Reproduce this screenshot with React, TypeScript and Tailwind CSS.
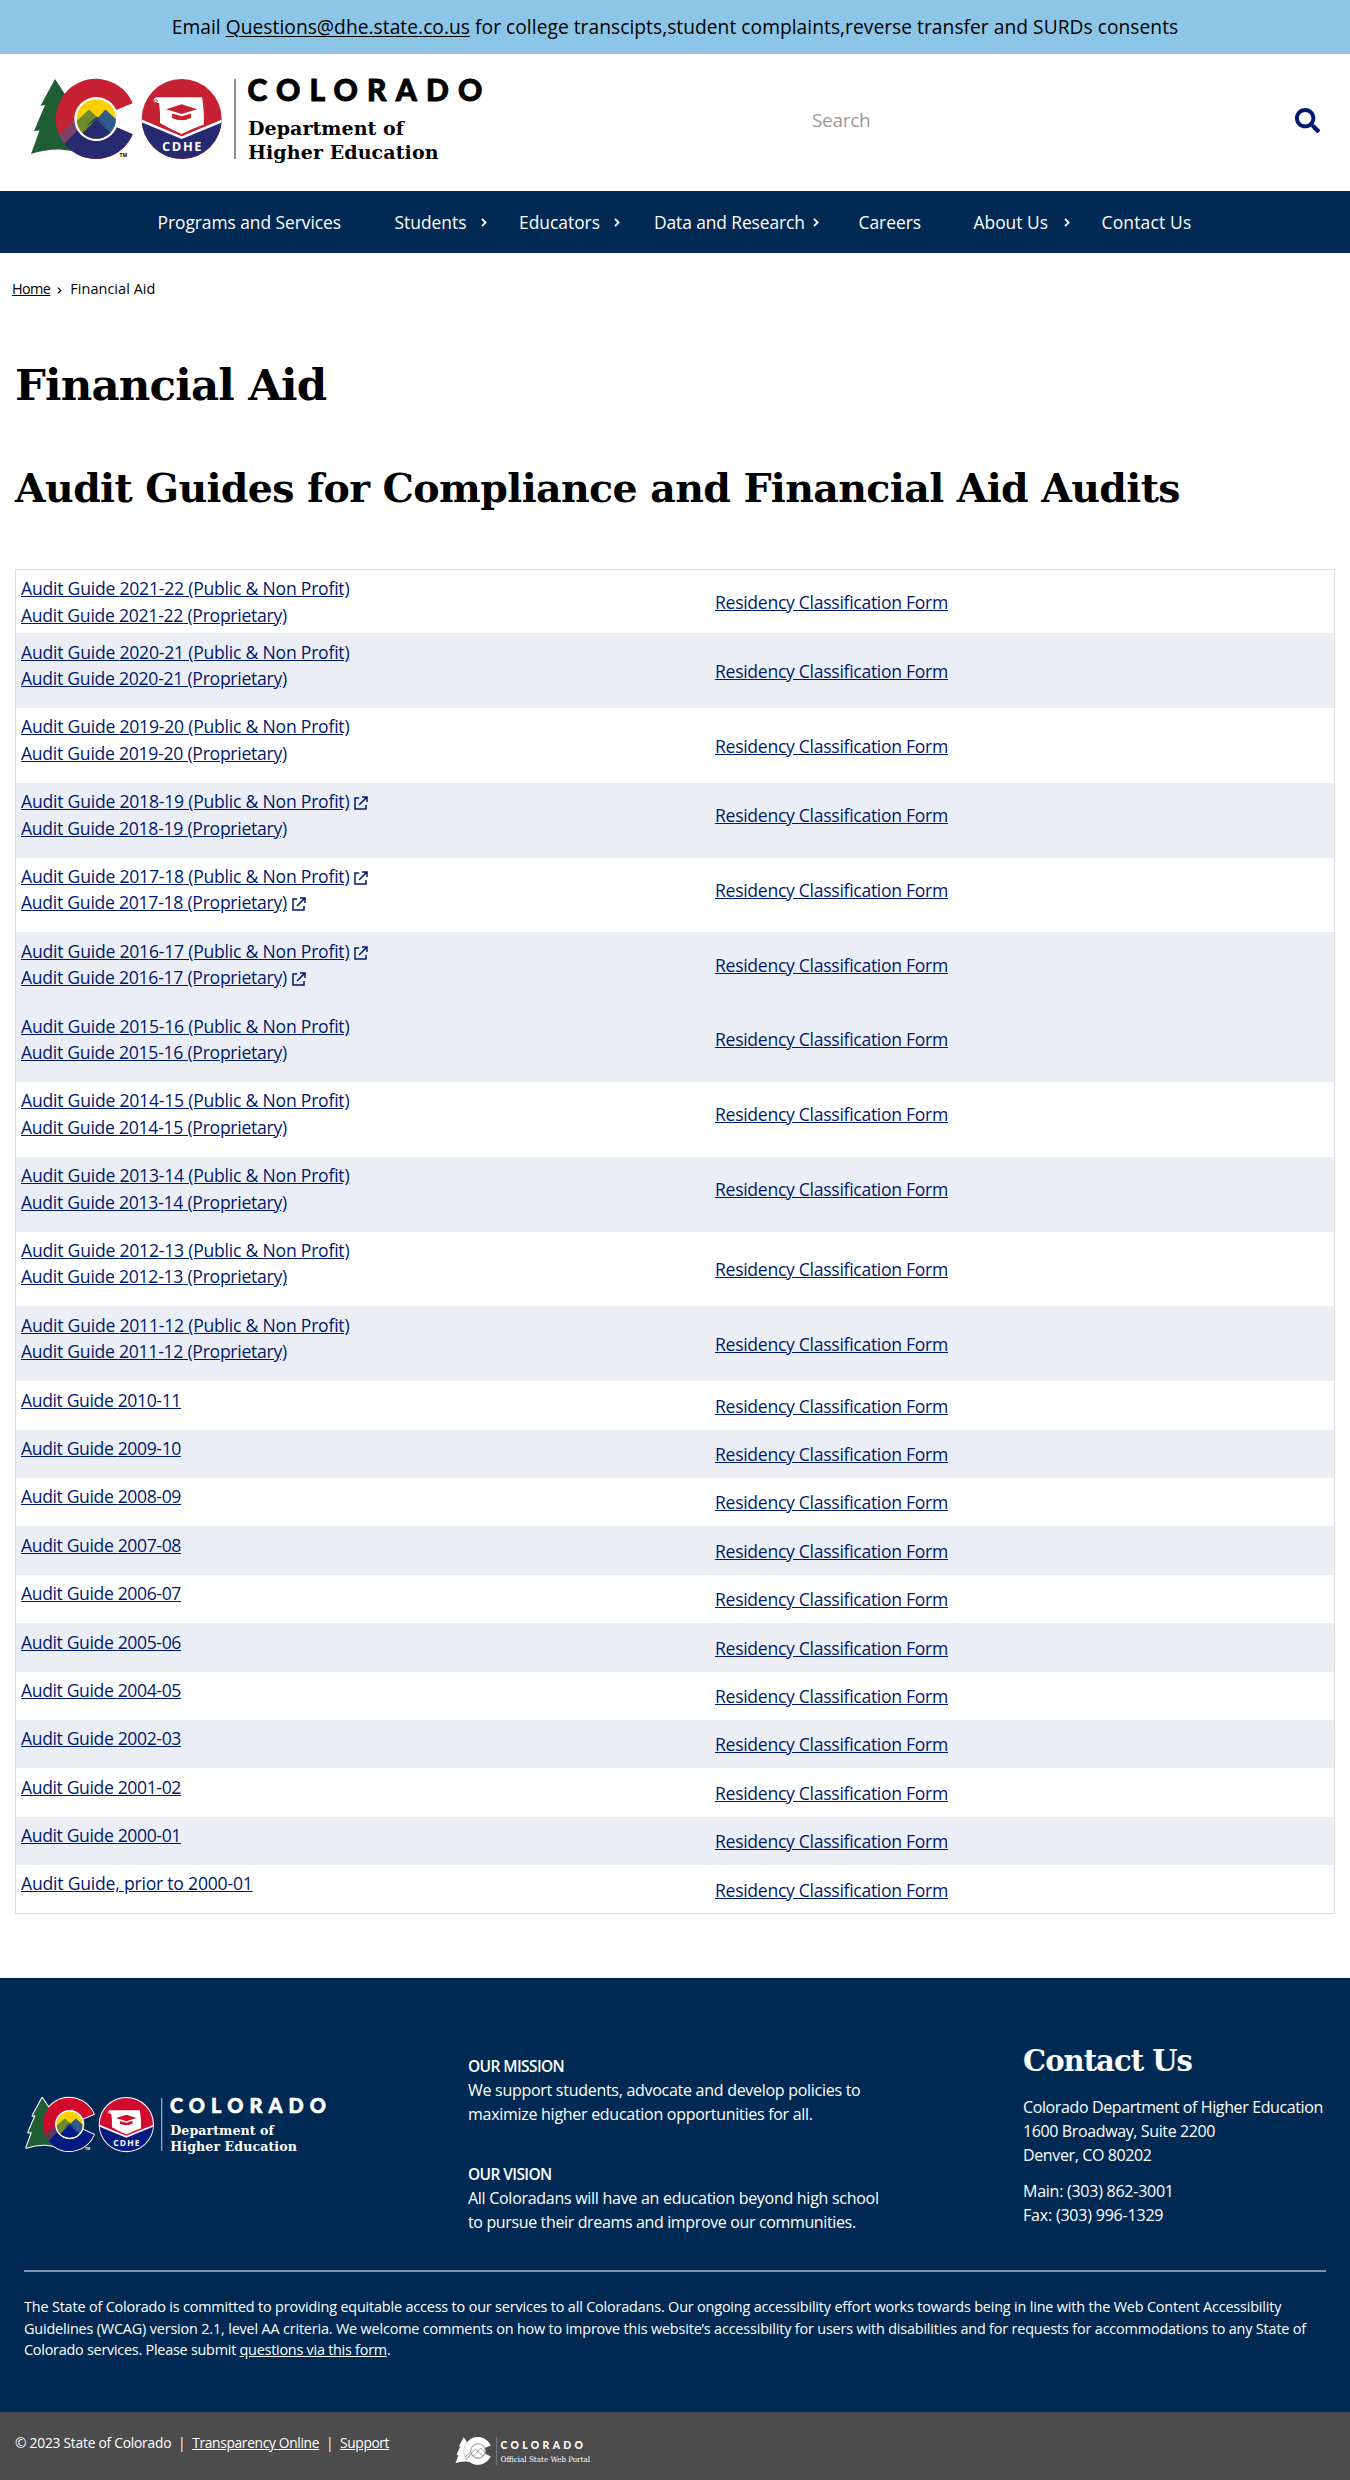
import React from "react";
import { FaSearch } from "react-icons/fa";

const SLAB = "font-['DejaVu_Serif',serif]";

const TREE =
  "M55 79 L40.5 105.8 L45 105 L34 131 L39.5 130.5 L31 154 Q46 149 60 149.5 Q72 150.5 82 153 L90 110 L69.5 101 Z";
const C_SHAPE =
  "M132.7 103.3 A40 40 0 1 0 132.7 134.3 L116 127 A21 21 0 1 1 115 110.5 Z";

function Logo({ id, light = false, className }: { id: string; light?: boolean; className: string }) {
  const ink = light ? "#ffffff" : "#000000";
  const red = light ? "#d20a2e" : "#c62033";
  const blue = light ? "#001b84" : "#262a70";
  return (
    <svg viewBox="20 70 470 100" className={className} role="img" aria-label="Colorado Department of Higher Education">
      <defs>
        <clipPath id={`${id}-c`}>
          <path d={C_SHAPE} />
        </clipPath>
        <clipPath id={`${id}-sun`}>
          <circle cx="96.3" cy="119" r="19.7" />
        </clipPath>
        <clipPath id={`${id}-seal`}>
          <circle cx="181.7" cy="119" r="40" />
        </clipPath>
      </defs>
      {light && (
        <g fill="none" stroke="#fff" strokeWidth="3.2" strokeLinejoin="round">
          <path d={TREE} />
          <path d={C_SHAPE} />
          <circle cx="181.7" cy="119" r="40" />
        </g>
      )}
      <path d={TREE} fill="#205f35" />
      <g clipPath={`url(#${id}-c)`}>
        <rect x="50" y="75" width="95" height="90" fill={red} />
        <path d="M54 140 L76 119 L96 132 L96 165 L54 165 Z" fill={light ? "#5b3a5e" : "#7b4468"} />
        <path d="M60 148 L96 112 L112 127 L145 127 L145 165 L60 165 Z" fill={blue} />
      </g>
      <circle cx="96.3" cy="119" r="22" fill="#fff" />
      <g clipPath={`url(#${id}-sun)`}>
        <rect x="74" y="96" width="45" height="45" fill="#fdd000" />
        <path d="M70 127 L89 109.5 L112 131 L96 145 L70 145 Z" fill="#6f8a2c" />
        <path d="M90 126 L105.5 109.5 L124 127 L110 145 Z" fill="#2e5c91" />
        <path d="M70 145 L96.5 119.5 L123 145 Z" fill={blue} />
        <path d="M86 126 L96.5 116.5 L107 126 L96.5 120 Z" fill="#234a6b" />
      </g>
      <text x="119.5" y="157.3" fontSize="5" fontWeight="700" fill={ink} fontFamily="Open Sans, sans-serif">
        TM
      </text>
      <g clipPath={`url(#${id}-seal)`}>
        <rect x="140" y="78" width="84" height="84" fill={red} />
        <path d="M140 121 L181.7 137.5 L224 121 L224 162 L140 162 Z" fill={blue} />
        <path d="M140 120.2 L181.7 137.6 L224 120.2" fill="none" stroke="#fff" strokeWidth="2.6" />
      </g>
      <path
        d="M156 97.3 H202 Q204.5 112 203.8 124.5 Q194 128 181.7 134 Q170 129 160 123 Q160.5 112 159 103 L154 102.5 Q152.5 99 156 97.3 Z"
        fill="#fff"
      />
      <circle cx="155.8" cy="101.3" r="1.4" fill="none" stroke={red} strokeWidth="0.9" />
      <path d="M166 109.3 L181.7 104.3 L197 109.3 L181.7 114 Z" fill={red} />
      <path d="M172 113.5 L181.7 116.3 L191 113.5 V118 Q181.7 122.5 172 118 Z" fill={red} />
      <text
        x="162"
        y="150.6"
        fontSize="12.8"
        fontWeight="700"
        fill="#fff"
        textLength="39.5"
        fontFamily="Open Sans, sans-serif"
      >
        CDHE
      </text>
      <rect x="234.2" y="79" width="1.6" height="80" fill={light ? "#b9c4d3" : "#777777"} />
      <text
        x="247.4"
        y="101"
        fontSize="30"
        fontWeight="900"
        fill={ink}
        stroke={ink}
        strokeWidth="0.9"
        textLength="235"
        fontFamily="Lato, sans-serif"
      >
        {"COLORAD"}
        <tspan>O</tspan>
      </text>
      <g fontSize="19" fontWeight="700" fill={ink} fontFamily="'DejaVu Serif', serif">
        <text x="248" y="135" textLength="156">
          Department of
        </text>
        <text x="248" y="158.5" textLength="190.5">
          Higher Education
        </text>
      </g>
    </svg>
  );
}

function PortalLogo() {
  return (
    <svg viewBox="0 0 140 32" className="h-8 w-[140px]" role="img" aria-label="Colorado Official State Web Portal">
      <g transform="translate(-6.2 -25.1) scale(0.345)" fill="#fff">
        <path d={TREE} />
        <circle cx="96.3" cy="119" r="22" />
        <path d={C_SHAPE} stroke="#4c4c4c" strokeWidth="1.5" />
        <path d={C_SHAPE} />
        <circle cx="96.3" cy="119" r="21" stroke="#8a8a8a" strokeWidth="2.6" />
        <path
          d="M60 146 L89 113 L110 134 M82 134 L105 111 L117 124 M57 139 L76 120"
          fill="none"
          stroke="#8a8a8a"
          strokeWidth="2.6"
        />
      </g>
      <rect x="45" y="2" width="0.8" height="28" fill="#858585" />
      <text x="49.5" y="14.3" fontSize="10.4" fontWeight="900" fill="#fff" textLength="82.5" fontFamily="Lato, sans-serif">
        COLORADO
      </text>
      <text
        x="49.5"
        y="27"
        fontSize="7.6"
        fill="#fff"
        textLength="89.5"
        lengthAdjust="spacingAndGlyphs"
        fontFamily="'DejaVu Serif Condensed', 'DejaVu Serif', serif"
      >
        Official State Web Portal
      </text>
    </svg>
  );
}

function ExternalIcon() {
  return (
    <svg
      viewBox="0 0 14 14"
      className="ml-[5px] inline-block h-[14px] w-[14px] align-[-2px]"
      fill="none"
      stroke="#001970"
      strokeWidth="1.5"
    >
      <path d="M5.2 2 H1 V13 H12 V9" />
      <path d="M5 9 L12.6 1.4 M8 1 H13 V6" />
    </svg>
  );
}

function Chevron({ className }: { className: string }) {
  return (
    <svg viewBox="0 0 6 9" className={`mt-0.5 h-[9px] w-[6px] ${className}`} fill="none" stroke="#fff" strokeWidth="1.8">
      <path d="M1 0.8 L4.6 4.5 L1 8.2" />
    </svg>
  );
}

const NAV = [
  { label: "Programs and Services", item: "w-[237px] tracking-[-0.05px]" },
  { label: "Students", item: "w-[124.5px]", chevron: "ml-[15px]" },
  { label: "Educators", item: "w-[135px]", chevron: "ml-[14px]" },
  { label: "Data and Research", item: "w-[204.5px] tracking-[-0.1px]", chevron: "ml-[8px]" },
  { label: "Careers", item: "w-[115px]" },
  { label: "About Us", item: "w-[128px]", chevron: "ml-[16px]" },
  { label: "Contact Us", item: "tracking-[0.2px]" },
];

type Row = { year: string; double?: boolean; shaded: boolean; ext?: number; lift?: boolean; first?: boolean };

const ROWS: Row[] = [
  { year: "2021-22", double: true, shaded: false, first: true },
  { year: "2020-21", double: true, shaded: true },
  { year: "2019-20", double: true, shaded: false },
  { year: "2018-19", double: true, shaded: true, ext: 1, lift: true },
  { year: "2017-18", double: true, shaded: false, ext: 2, lift: true },
  { year: "2016-17", double: true, shaded: true, ext: 2, lift: true },
  { year: "2015-16", double: true, shaded: true, lift: true },
  { year: "2014-15", double: true, shaded: false, lift: true },
  { year: "2013-14", double: true, shaded: true, lift: true },
  { year: "2012-13", double: true, shaded: false },
  { year: "2011-12", double: true, shaded: true },
  { year: "2010-11", shaded: false },
  { year: "2009-10", shaded: true },
  { year: "2008-09", shaded: false },
  { year: "2007-08", shaded: true },
  { year: "2006-07", shaded: false },
  { year: "2005-06", shaded: true },
  { year: "2004-05", shaded: false },
  { year: "2002-03", shaded: true },
  { year: "2001-02", shaded: false },
  { year: "2000-01", shaded: true },
  { year: "prior", shaded: false },
];

function AuditRow({ row }: { row: Row }) {
  const height = row.first ? "h-[63.2px]" : row.double ? "h-[74.8px]" : "h-[48.4px]";
  return (
    <div className={`flex ${height} ${row.shaded ? "bg-[#ebeff5]" : "bg-white"}`}>
      <div className="w-[699px] pt-[5.4px] pl-[5px]">
        {row.double ? (
          <>
            <div className="whitespace-nowrap">
              <a href="#" className="tracking-[-0.23px] underline">
                Audit Guide {row.year} (Public &amp; Non Profit)
              </a>
              {row.ext && <ExternalIcon />}
            </div>
            <div className="whitespace-nowrap">
              <a href="#" className="tracking-[-0.27px] underline">
                Audit Guide {row.year} (Proprietary)
              </a>
              {row.ext === 2 && <ExternalIcon />}
            </div>
          </>
        ) : row.year === "prior" ? (
          <a href="#" className="tracking-[-0.22px] underline">
            Audit Guide, prior to 2000-01
          </a>
        ) : (
          <a href="#" className="tracking-[-0.38px] underline">
            Audit Guide {row.year}
          </a>
        )}
      </div>
      <div className={`flex items-center pt-px ${row.lift ? "pb-[11px]" : ""}`}>
        <a href="#" className="tracking-[-0.3px] underline">
          Residency Classification Form
        </a>
      </div>
    </div>
  );
}

export default function App() {
  return (
    <div className="flex min-h-[2480px] w-[1350px] flex-col bg-white font-['Open_Sans','Noto_Sans',sans-serif] text-black">
      <div className="flex h-[54px] items-center justify-center bg-[#8dc5e6] text-[19.2px] tracking-[0.04px]">
        <p>
          Email{" "}
          <a href="#" className="underline decoration-1 underline-offset-2">
            Questions@dhe.state.co.us
          </a>{" "}
          for college transcipts,student complaints,reverse transfer and SURDs consents
        </p>
      </div>

      <header className="flex h-[137px] pt-4 pl-5">
        <Logo id="top" className="h-[100px] w-[470px] shrink-0 overflow-visible" />
        <div className="ml-[322px] flex h-[100px] w-[508px] items-center justify-between">
          <span className="text-[19px] tracking-[-0.3px] text-[#999999]">Search</span>
          <FaSearch className="h-[25px] w-[25px] text-[#001970]" />
        </div>
      </header>

      <nav className="flex h-[62px] items-center bg-[#002a54] pl-[157.5px] text-[17.4px] text-white">
        {NAV.map((n) => (
          <a key={n.label} href="#" className={`flex items-center whitespace-nowrap ${n.item}`}>
            {n.label}
            {n.chevron && <Chevron className={n.chevron} />}
          </a>
        ))}
      </nav>

      <div className="mt-[24px] flex h-6 items-center pl-3 text-[14.4px]">
        <a href="#" className="tracking-[-0.6px] underline">
          Home
        </a>
        <svg viewBox="0 0 6 9" className="mt-0.5 mr-2 ml-[7px] h-[7px] w-[5px]" fill="none" stroke="#000" strokeWidth="1.6">
          <path d="M1 0.8 L4.6 4.5 L1 8.2" />
        </svg>
        <span className="tracking-[0.08px]">Financial Aid</span>
      </div>

      <main className="px-[15px]">
        <h1 className={`mt-[54px] h-[60px] text-[43.5px] leading-[60px] font-bold tracking-[-0.85px] ${SLAB}`}>
          Financial Aid
        </h1>
        <h2 className={`mt-[43px] h-[60px] text-[39.5px] leading-[60px] font-bold tracking-[-0.62px] whitespace-nowrap ${SLAB}`}>
          Audit Guides for Compliance and Financial Aid Audits
        </h2>
        <div className="mt-[51px] border border-[#dddddd] text-[17.6px] leading-[26.4px] text-[#001970]">
          {ROWS.map((row) => (
            <AuditRow key={row.year} row={row} />
          ))}
        </div>
      </main>

      <footer className="mt-auto">
        <div className="h-[434px] bg-[#002a54] px-6 text-white">
          <div className="flex h-[294px] border-b-2 border-[#8093ab]">
            <Logo id="bottom" light className="mt-[114px] -ml-[5px] h-[66.4px] w-[312px] shrink-0 overflow-visible" />
            <div className="ml-[137px] w-[555px] pt-[76px] text-[16px] leading-6 tracking-[-0.28px] whitespace-nowrap">
              <p className="text-[15.5px] font-semibold tracking-[-0.6px]">OUR MISSION</p>
              <p>We support students, advocate and develop policies to</p>
              <p>maximize higher education opportunities for all.</p>
              <p className="mt-9 text-[15.5px] font-semibold tracking-[-0.6px]">OUR VISION</p>
              <p>All Coloradans will have an education beyond high school</p>
              <p className="tracking-[-0.36px]">to pursue their dreams and improve our communities.</p>
            </div>
            <div className="pt-[63px] text-[16px] leading-[24.1px] tracking-[-0.38px] whitespace-nowrap">
              <h3 className={`h-10 text-[29px] leading-10 font-bold tracking-[-0.95px] ${SLAB}`}>Contact Us</h3>
              <p className="mt-[14px]">Colorado Department of Higher Education</p>
              <p>1600 Broadway, Suite 2200</p>
              <p>Denver, CO 80202</p>
              <p className="mt-3 tracking-[-0.25px]">Main: (303) 862-3001</p>
              <p className="tracking-[-0.2px]">Fax: (303) 996-1329</p>
            </div>
          </div>
          <p className="pt-[24px] text-[14.4px] leading-[21.6px] tracking-[-0.165px] whitespace-nowrap">
            The State of Colorado is committed to providing equitable access to our services to all Coloradans. Our
            ongoing accessibility effort works towards being in line with the Web Content Accessibility
            <br />
            Guidelines (WCAG) version 2.1, level AA criteria. We welcome comments on how to improve this website’s
            accessibility for users with disabilities and for requests for accommodations to any State of
            <br />
            <span className="tracking-[-0.24px]">
              Colorado services. Please submit{" "}
              <a href="#" className="underline">
                questions via this form
              </a>
              .
            </span>
          </p>
        </div>
        <div className="flex h-[68px] bg-[#4c4c4c] pl-[15px] text-white">
          <div className="flex h-[62px] w-[436px] items-center text-[13.8px] tracking-[-0.24px]">
            <span>© 2023 State of Colorado</span>
            <span className="w-[21px] text-center">|</span>
            <a href="#" className="tracking-[-0.34px] underline">
              Transparency Online
            </a>
            <span className="w-[21px] text-center">|</span>
            <a href="#" className="tracking-[-0.4px] underline">
              Support
            </a>
          </div>
          <div className="pt-[23px]">
            <PortalLogo />
          </div>
        </div>
      </footer>
    </div>
  );
}
